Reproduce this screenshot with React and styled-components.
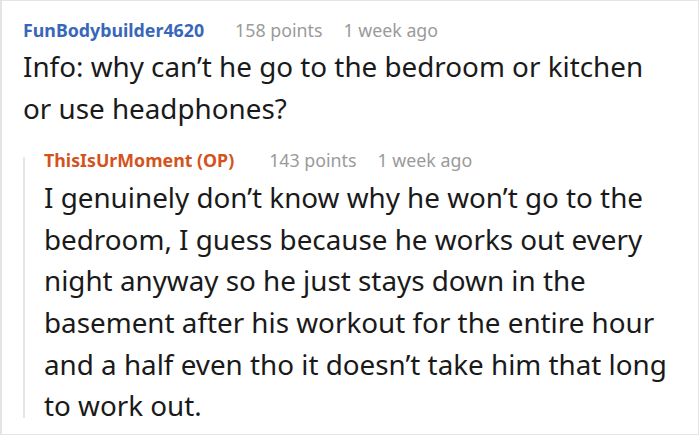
import React from 'react';
import styled, { createGlobalStyle } from 'styled-components';

const GlobalStyle = createGlobalStyle`
    html, body {
        margin: 0;
        padding: 0;
        background: #fff;
    }
    body {
        font-family: "Noto Sans", "Open Sans", sans-serif;
    }
`;

const Frame = styled.div`
    box-sizing: border-box;
    width: 699px;
    height: 435px;
    border: 1px solid #e4e4e4;
    border-left-width: 2px;
    padding: 19px 0 0 21px;
    overflow: hidden;
`;

const Comment = styled.div`
    display: flex;
    flex-direction: column;
    gap: 6px;
`;

const Meta = styled.div`
    display: flex;
    align-items: baseline;
    font-size: 17.8px;
    line-height: 20px;
`;

const Author = styled.span`
    font-weight: 700;
    color: ${props => props.op ? '#d4531d' : '#3867ba'};
    margin-right: ${props => props.op ? '35px' : '31px'};
`;

const Points = styled.span`
    color: #9a9a9a;
    margin-right: 21px;
`;

const Age = styled.span`
    color: #9a9a9a;
`;

const Body = styled.p`
    margin: 0;
    font-size: 27.8px;
    line-height: 41.6px;
    color: #1a1a1a;
    white-space: nowrap;
`;

const Reply = styled.div`
    display: flex;
    margin-top: 21px;
`;

const ThreadLine = styled.div`
    width: 2px;
    margin: 7px 0 9px;
    background: #e6e6e6;
    flex-shrink: 0;
`;

const ReplyContent = styled(Comment)`
    padding-left: 19px;
    gap: 7px;
`;

export default function App() {
    return (
        <>
            <GlobalStyle />
            <Frame>
                <Comment>
                    <Meta>
                        <Author>FunBodybuilder4620</Author>
                        <Points>158 points</Points>
                        <Age>1 week ago</Age>
                    </Meta>
                    <Body>
                        Info: why can’t he go to the bedroom or kitchen<br />
                        or use headphones?
                    </Body>
                </Comment>
                <Reply>
                    <ThreadLine />
                    <ReplyContent>
                        <Meta>
                            <Author op>ThisIsUrMoment (OP)</Author>
                            <Points>143 points</Points>
                            <Age>1 week ago</Age>
                        </Meta>
                        <Body>
                            I genuinely don’t know why he won’t go to the<br />
                            bedroom, I guess because he works out every<br />
                            night anyway so he just stays down in the<br />
                            basement after his workout for the entire hour<br />
                            and a half even tho it doesn’t take him that long<br />
                            to work out.
                        </Body>
                    </ReplyContent>
                </Reply>
            </Frame>
        </>
    );
}
